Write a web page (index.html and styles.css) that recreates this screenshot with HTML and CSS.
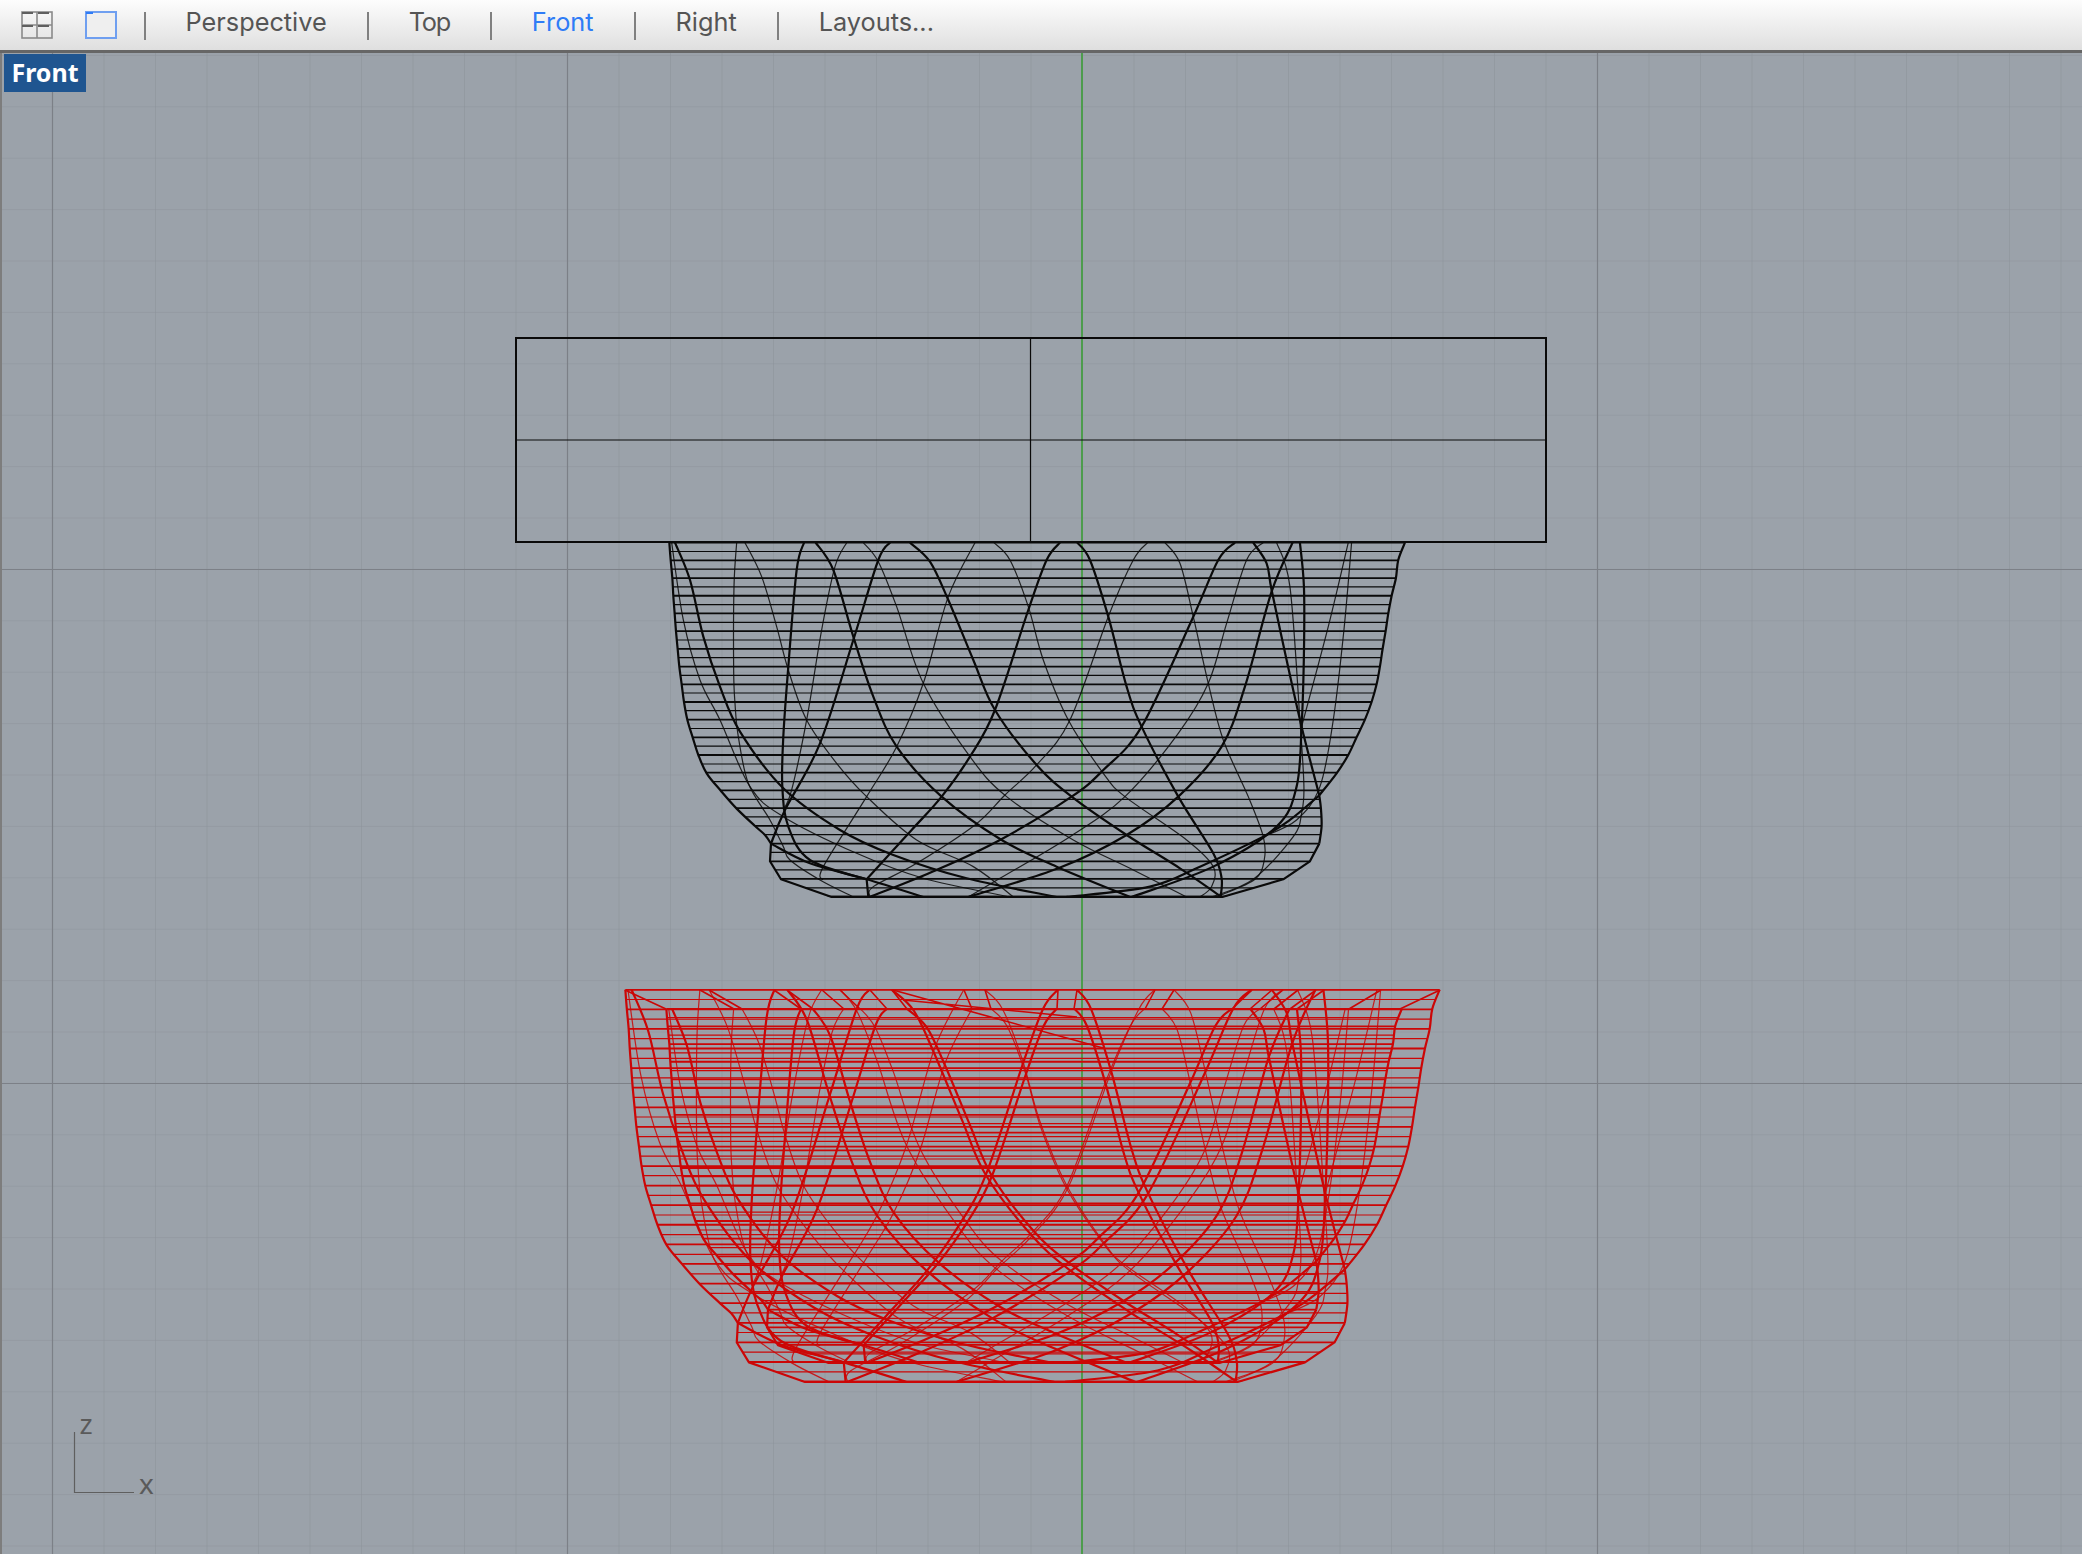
FILE: index.html
```html
<!DOCTYPE html>
<html lang="en">
<head>
    <meta charset="UTF-8">
    <meta name="viewport" content="width=device-width, initial-scale=1.0">
    <title>Front viewport</title>
    <link rel="stylesheet" href="styles.css">
</head>
<body>
    <div class="toolbar">
        <svg class="paneIcon" width="32" height="28" viewBox="0 0 32 28">
            <rect x="1" y="1" width="30" height="26" class="paneFrame"/>
            <path d="M1 14H31M16 1V27" class="paneFrame"/>
            <path d="M1 2H12M17 2H28M1 15H12M17 15H28" class="paneBar"/>
        </svg>
        <svg class="paneIcon singlePane" width="32" height="28" viewBox="0 0 32 28">
            <rect x="1" y="1" width="30" height="26" class="paneFrameActive"/>
            <path d="M1 2H8" class="paneBarActive"/>
        </svg>
        <div class="tabs">
            <span class="tabSep"></span>
            <span class="tab">Perspective</span>
            <span class="tabSep"></span>
            <span class="tab tabTight">Top</span>
            <span class="tabSep"></span>
            <span class="tab tabActive">Front</span>
            <span class="tabSep"></span>
            <span class="tab">Right</span>
            <span class="tabSep"></span>
            <span class="tab">Layouts...</span>
        </div>
    </div>

    <div class="viewport">
        <svg class="canvas" width="2080" height="1501" viewBox="2 53 2080 1501">
            <defs>
                <pattern id="minorGrid" x="0.5" y="3.5" width="51.5" height="51.4" patternUnits="userSpaceOnUse">
                    <path d="M0 0V51.4M0 0H51.5" class="gridMinor"/>
                </pattern>

                <clipPath id="bowlClip">
                    <polygon points="88,66 92,120 97,174 100,228 104,281 108,334 113,387 118,440 125,493 132,546 142,599 158,652 175,705 200,760 243,813 290,866 345,918 375,945 393,971 390,1024 423,1078 575,1133 1747,1133 1930,1078 2010,1024 2038,971 2045,918 2043,866 2038,826 2090,760 2125,705 2150,652 2175,599 2195,546 2210,493 2220,440 2228,387 2237,334 2245,281 2255,228 2268,174 2275,120 2295,66"/>
                </clipPath>

                <g id="bowl" transform="translate(640 520) scale(0.3333)">
                    <g clip-path="url(#bowlClip)">
                        <path class="rowThin" d="M0 94.5H2400M0 147.6H2400M0 200.7H2400M0 253.8H2400M0 307H2400M0 360H2400M0 413H2400M0 466H2400M0 519H2400M0 572H2400M0 625.5H2400M0 678.6H2400M0 732H2400M0 785H2400M0 838H2400M0 891H2400M0 944H2400M0 997H2400M0 1050H2400M0 1103.5H2400"/>
                        <path class="rowThick" d="M0 68H2400M0 121H2400M0 174.2H2400M0 227.3H2400M0 280.4H2400M0 333.5H2400M0 386.6H2400M0 439.7H2400M0 493H2400M0 546H2400M0 599H2400M0 652H2400M0 705H2400M0 758H2400M0 811H2400M0 864.5H2400M0 917.6H2400M0 971H2400M0 1024H2400M0 1077H2400M0 1130H2400"/>
                    </g>

                    <!-- outline: the walls are curves, the lip is faceted -->
                    <path class="curveBold smooth" d="M88 68L92 120 97 174 100 228 104 281 108 334 113 387 118 440 125 493 132 546 142 599 158 652 175 705 200 760 243 813 290 866 345 918 375 945 393 971"/>
                    <path class="curveBold smooth" d="M393 971L510 1030 680 1078 850 1131"/>
                    <path class="curveBold" d="M393 971L390 1024 423 1078 575 1131 1747 1131 1930 1078 2010 1024 2038 971"/>
                    <path class="curveBold smooth" d="M2038 971L2045 918 2043 866 2038 826"/>
                    <path class="curveBold smooth" d="M2038 826L2090 760 2125 705 2150 652 2175 599 2195 546 2210 493 2220 440 2228 387 2237 334 2245 281 2255 228 2268 174 2275 120 2295 68"/>

                    <!-- heavy isocurves -->
                    <path class="curveBold smooth" d="M105 68L150 180 190 350 240 500 300 635 430 805 600 930 760 1005 980 1075 1250 1131"/>
                    <path class="curveBold smooth" d="M527 68L580 150 640 350 700 530 770 680 905 830 1085 960 1250 1040 1470 1131"/>
                    <path class="curveBold smooth" d="M810 68L870 125 925 240 1000 420 1065 570 1190 735 1295 830 1460 945 1620 1045 1745 1131"/>
                    <path class="curveBold smooth" d="M1312 68L1350 120 1405 290 1460 500 1505 620 1615 830 1720 1000 1745 1075 1742 1131"/>
                    <path class="curveBold smooth" d="M1840 68L1880 130 1895 210 1940 420 1985 620 2038 826"/>
                    <path class="curveBold smooth" d="M492 68L470 150 445 440 430 650 427 800 445 920 510 1020 680 1078"/>
                    <path class="curveBold smooth" d="M750 68L715 120 640 360 540 670 435 870 393 971"/>
                    <path class="curveBold smooth" d="M1260 68L1220 120 1165 270 1065 570 990 710 905 830 815 930 680 1078"/>
                    <path class="curveBold" d="M680 1078L685 1131"/>
                    <path class="curveBold smooth" d="M1785 68L1735 120 1658 295 1505 620 1390 750 1295 830 1080 960 890 1050 690 1131"/>
                    <path class="curveBold smooth" d="M1958 68L1895 215 1815 500 1745 680 1615 830 1460 945 1255 1045 985 1131"/>
                    <path class="curveBold smooth" d="M1980 68L1992 200 1992 400 1985 620 1970 800 1910 920 1720 1040 1475 1131"/>
                    <path class="curveBold smooth" d="M2038 826L1950 900 1870 950 1680 1040 1530 1100 1280 1131"/>

                    <!-- light isocurves -->
                    <path class="curveThin smooth" d="M95 68L130 300 180 480 240 600 330 800 430 890 650 1000 850 1075 1110 1131"/>
                    <path class="curveThin smooth" d="M290 68L282 200 281 450 285 550 295 650 325 790 390 900 430 980 450 1020 540 1080 640 1131"/>
                    <path class="curveThin smooth" d="M315 68L365 170 410 320 445 450 500 600 590 730 680 830 830 960 1000 1040 1120 1131"/>
                    <path class="curveThin smooth" d="M620 68L585 140 545 330 500 600 455 810 430 870"/>
                    <path class="curveThin smooth" d="M670 68L715 125 770 260 850 490 990 710 1100 830 1300 960 1480 1050 1640 1131"/>
                    <path class="curveThin smooth" d="M1005 68L925 230 850 490 770 680 680 830 550 1040 548 1080"/>
                    <path class="curveThin smooth" d="M1062 68L1110 120 1165 260 1210 420 1285 600 1390 760 1455 830 1640 960 1720 1040 1715 1100 1680 1131"/>
                    <path class="curveThin smooth" d="M1523 68L1480 120 1405 290 1290 600 1190 735 1095 825 1005 915 830 1030 700 1100 690 1131"/>
                    <path class="curveThin smooth" d="M1575 68L1620 130 1660 290 1705 490 1750 660 1825 830 1870 950 1873 1020 1845 1078 1745 1125"/>
                    <path class="curveThin smooth" d="M1870 68L1820 120 1760 310 1705 490 1615 640 1455 830 1290 950 1080 1075 985 1131"/>
                    <path class="curveThin smooth" d="M1910 68L1950 200 1980 600 1992 800 1985 880 1960 950 1840 1078 1715 1131"/>
                    <path class="curveThin smooth" d="M2135 68L2112 330 2080 600 2040 800 1970 900 1870 950"/>
                    <path class="curveThin smooth" d="M2125 68L2065 320 1985 620"/>
                </g>
            </defs>

            <rect x="2" y="53" width="2080" height="1501" class="gridFill"/>
            <path class="gridMajor" d="M52.5 53V1554M567.5 53V1554M1597.5 53V1554M0 569.5H2082M0 1083.5H2082"/>
            <path class="axisGreen" d="M1082 53V1554"/>

            <!-- surface box -->
            <rect x="516" y="338" width="1030" height="204" class="boxEdge"/>
            <path class="boxSplit" d="M516 440H1546M1030.5 338V542"/>

            <use href="#bowl" class="wireBlack"/>

            <!-- the red surface is the same bowl twice, offset and scaled, tied at the rim -->
            <use href="#bowl" class="wireRed" transform="translate(-115.6 389) scale(1.107)"/>
            <use href="#bowl" class="wireRed" transform="translate(-3 466)"/>
            <path class="rimTies" d="M625 990L666 1009M774 990L801 1009M787 990L813 1009M870 990L887 1009M892 990L907 1009M1058 990L1057 1009M1077 990L1074 1009M1252 990L1232 1009M1272 990L1250 1009M1316 990L1290 1009M1324 990L1297 1009M700 990L734 1009M709 990L742 1009M822 990L844 1009M840 990L860 1009M964 990L972 1009M985 990L991 1009M1155 990L1145 1009M1174 990L1162 1009M1283 990L1260 1009M1298 990L1274 1009M1381 990L1349 1009M1440 990L1400 1009"/>
            <path class="rimTies" d="M893 990L1103 1048M903 1000L1077 1017"/>

            <!-- axis widget -->
            <path class="axisIcon" d="M74.5 1432V1492.5H134"/>
            <text x="79.5" y="1434" class="axisLabel">z</text>
            <text x="139" y="1494" class="axisLabel">x</text>
        </svg>
        <div class="viewLabel">Front</div>
    </div>

    <script src="script.js"></script>
</body>
</html>
```

FILE: styles.css
```css
html,
body {
    margin: 0;
    padding: 0;
    height: 100%;
}

body {
    display: flex;
    flex-direction: column;
    height: 1554px;
    overflow: hidden;
    font-family: Inter, "Noto Sans", sans-serif;
    background-color: #9ba2aa;
}

.toolbar {
    display: flex;
    align-items: center;
    height: 50px;
    flex: none;
    padding-left: 21px;
    background: linear-gradient(#fdfdfd, #dfdfdf);
    border-bottom: 3px solid #666;
}

.paneIcon {
    flex: none;
    margin-right: 32px;
}

.paneFrame {
    fill: none;
    stroke: #8a8a8a;
    stroke-width: 1.6;
}

.paneBar {
    fill: none;
    stroke: #5f5f5f;
    stroke-width: 2;
}

.paneFrameActive {
    fill: #efefef;
    stroke: #6f9ff0;
    stroke-width: 2;
}

.paneBarActive {
    fill: none;
    stroke: #2f7cf6;
    stroke-width: 2;
}

.tabs {
    display: flex;
    align-items: center;
    gap: 40px;
    margin-left: -5.5px;
}

.tab {
    font-size: 25.3px;
    color: #555;
    line-height: 30px;
    margin-bottom: 7px;
}

.tabTight {
    letter-spacing: -1.3px;
}

.tabActive {
    color: #2f7cf6;
}

.tabSep {
    width: 2px;
    height: 28px;
    margin-top: 1px;
    background-color: #808080;
}

.viewport {
    position: relative;
    flex: 1;
    border-left: 2px solid #7d7d7d;
}

.canvas {
    display: block;
}

.gridFill {
    fill: url(#minorGrid);
}

.gridMinor {
    fill: none;
    stroke: #8d939b;
    stroke-width: 1.2;
}

.gridMajor {
    fill: none;
    stroke: #7c8087;
    stroke-width: 1.2;
}

.axisGreen {
    fill: none;
    stroke: #4d9c4d;
    stroke-width: 2;
}

.boxEdge {
    fill: none;
    stroke: #0a0a0a;
    stroke-width: 2;
}

.boxSplit {
    fill: none;
    stroke: #0a0a0a;
    stroke-width: 1.2;
}

.wireBlack {
    color: #0a0a0a;
}

.wireRed {
    color: #cc0606;
}

.rowThin,
.rowThick,
.curveBold,
.curveThin {
    fill: none;
    stroke: currentColor;
    stroke-linejoin: round;
    vector-effect: non-scaling-stroke;
}

.rowThin {
    stroke-width: 1.2;
}

.rowThick {
    stroke-width: 1.8;
}

.curveBold {
    stroke-width: 2.2;
}

.curveThin {
    stroke-width: 1.2;
    opacity: 0.85;
}

.rimTies {
    fill: none;
    stroke: #cc0606;
    stroke-width: 1.6;
}

.axisIcon {
    fill: none;
    stroke: #5f5f5f;
    stroke-width: 1.2;
}

.axisLabel {
    font-family: "Noto Sans", sans-serif;
    font-size: 28px;
    fill: #5a5a5a;
}

.viewLabel {
    position: absolute;
    top: 1px;
    left: 2px;
    width: 82px;
    height: 38px;
    line-height: 36px;
    text-align: center;
    font-family: "Noto Sans", sans-serif;
    font-weight: 700;
    font-size: 25px;
    color: #fff;
    background-color: #1f5590;
}
```

FILE: script.js
```js
// turn the sampled points of each isocurve into a smooth catmull-rom path
document.querySelectorAll('.smooth').forEach(curve => {
    const nums = curve.getAttribute('d').match(/[\d.]+/g).map(Number);
    const pts = [];
    for (let i = 0; i < nums.length; i += 2) {
        pts.push([nums[i], nums[i + 1]]);
    }

    let d = `M${pts[0][0]} ${pts[0][1]}`;
    for (let i = 0; i < pts.length - 1; i++) {
        const p0 = pts[i - 1] || pts[i];
        const p1 = pts[i];
        const p2 = pts[i + 1];
        const p3 = pts[i + 2] || p2;
        const c1x = p1[0] + (p2[0] - p0[0]) / 6;
        const c1y = p1[1] + (p2[1] - p0[1]) / 6;
        const c2x = p2[0] - (p3[0] - p1[0]) / 6;
        const c2y = p2[1] - (p3[1] - p1[1]) / 6;
        d += `C${c1x} ${c1y} ${c2x} ${c2y} ${p2[0]} ${p2[1]}`;
    }
    curve.setAttribute('d', d);
});
```
